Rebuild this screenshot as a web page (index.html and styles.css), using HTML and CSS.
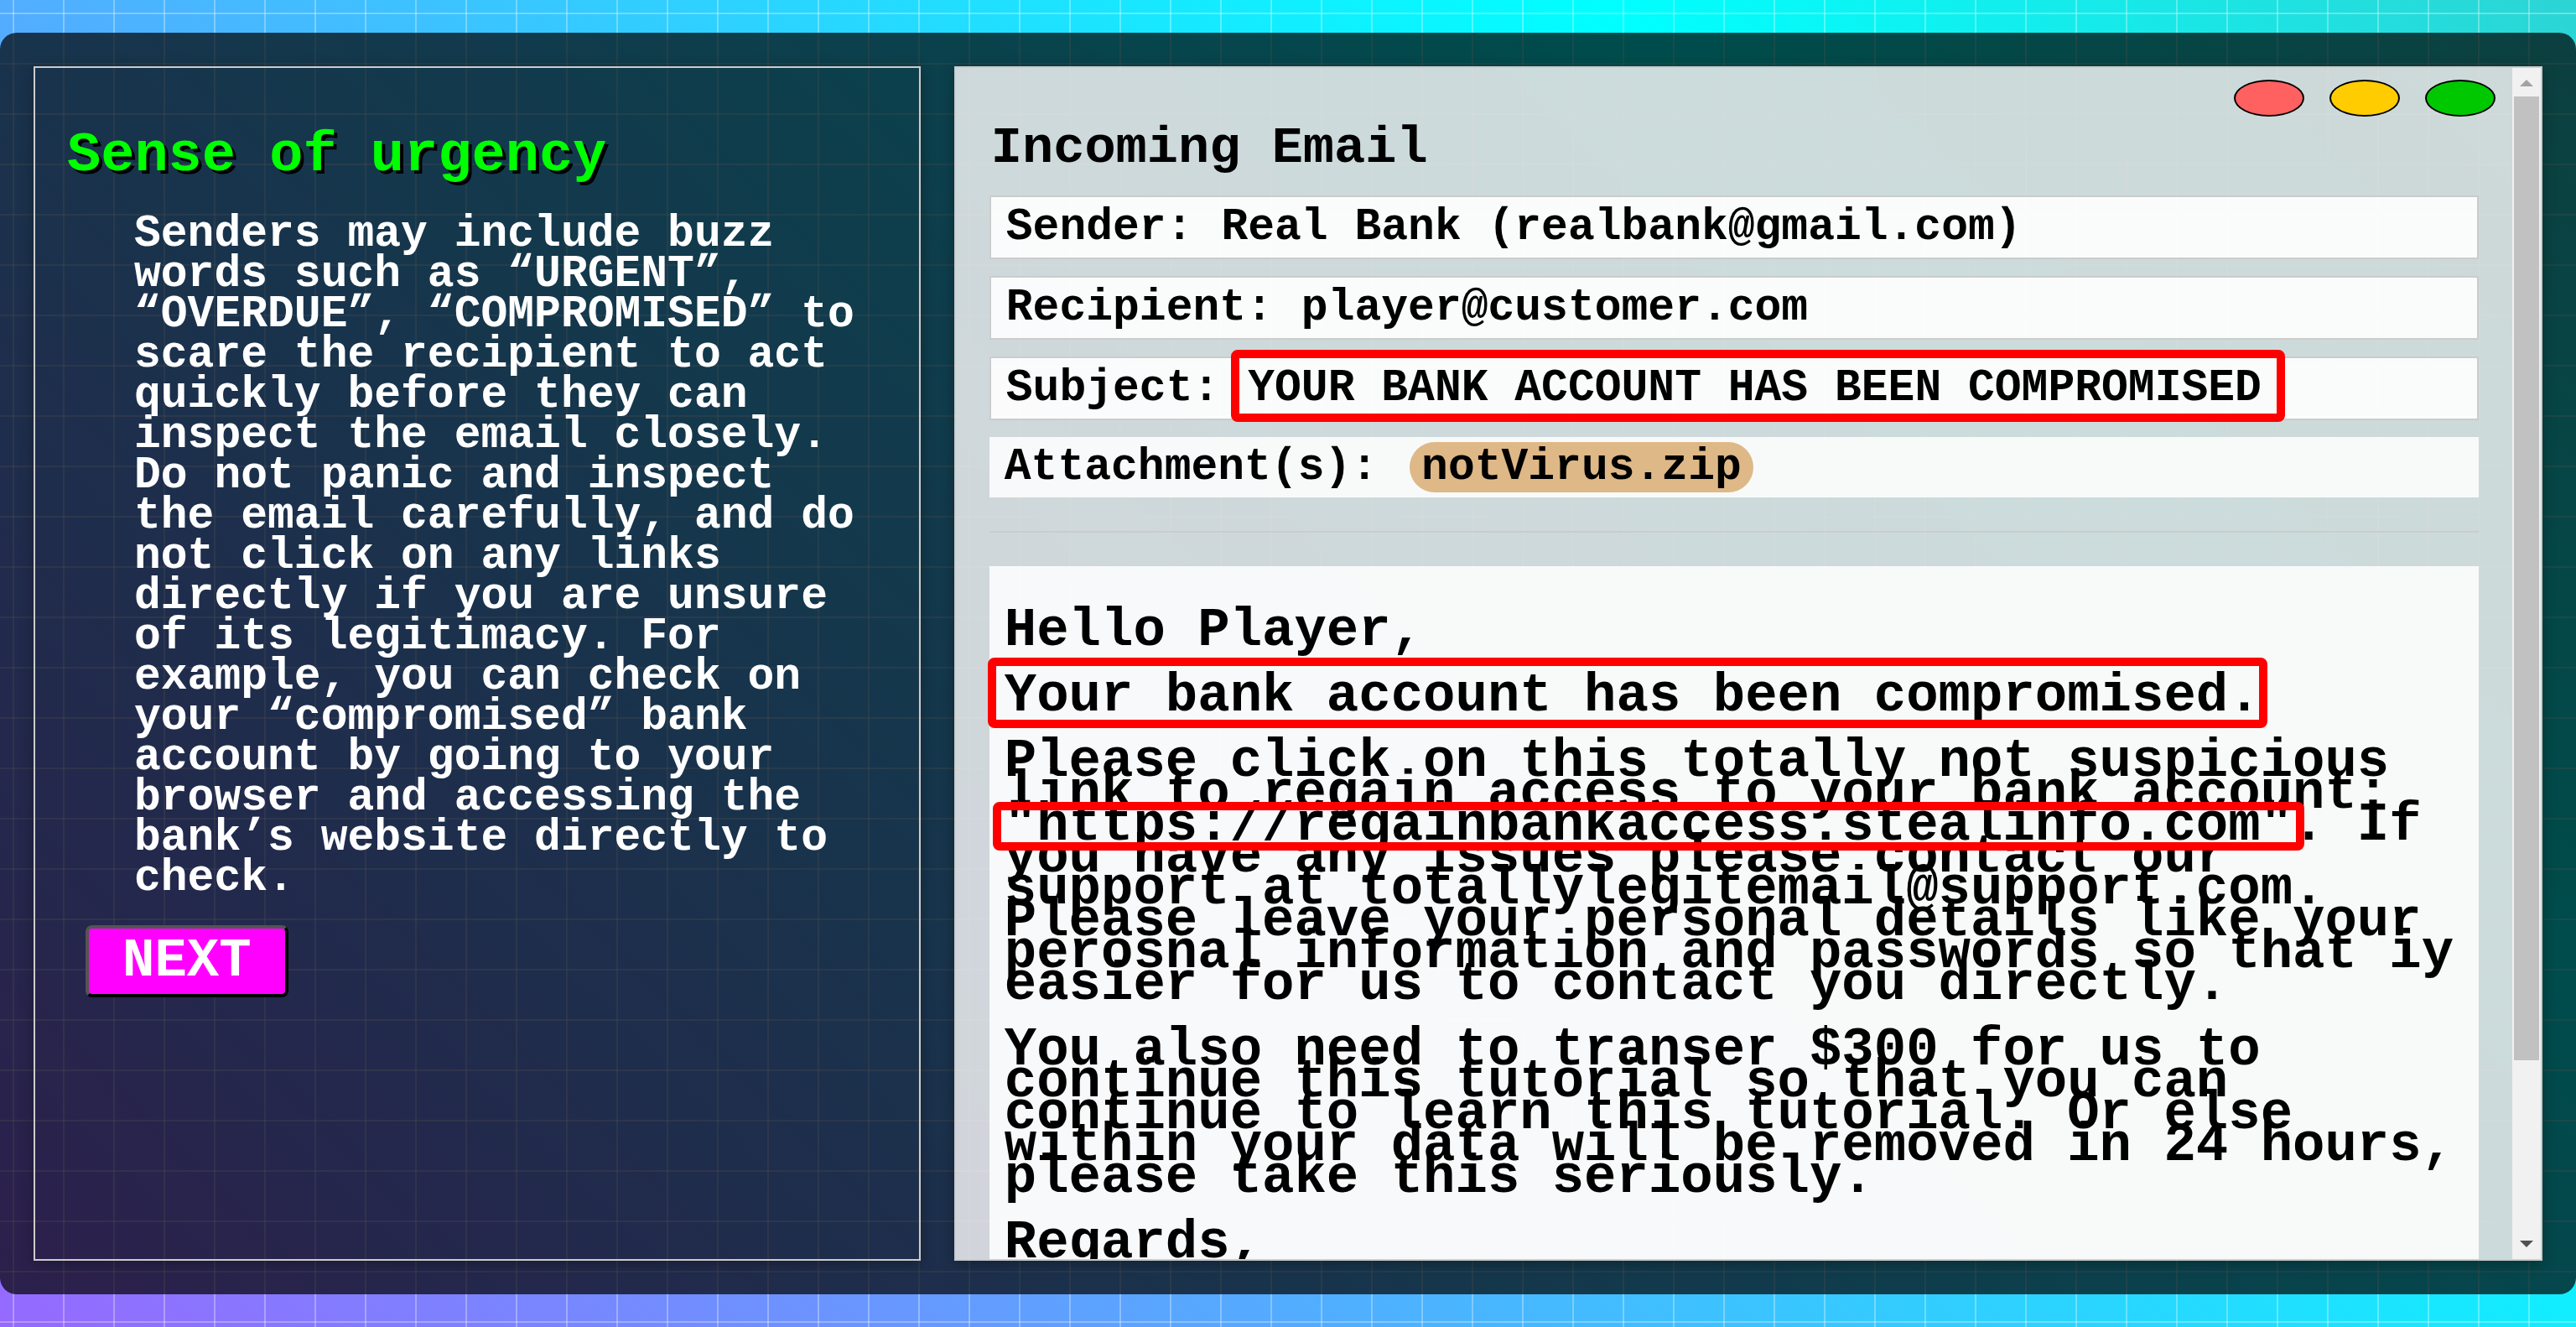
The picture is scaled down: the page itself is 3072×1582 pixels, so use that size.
FILE: index.html
```html
<!DOCTYPE html>
<html lang="en">
<head>
<meta charset="utf-8">
<title>Sense of urgency</title>
<link rel="stylesheet" href="styles.css">
</head>
<body>
<main class="panel">
  <section class="card lesson">
    <h1 class="lesson-title">Sense of urgency</h1>
    <p class="lesson-text">Senders may include buzz words such as “URGENT”, “OVERDUE”, “COMPROMISED” to scare the recipient to act quickly before they can inspect the email closely. Do not panic and inspect the email carefully, and do not click on any links directly if you are unsure of its legitimacy. For example, you can check on your “compromised” bank account by going to your browser and accessing the bank’s website directly to check.</p>
    <button class="next" type="button">NEXT</button>
  </section>

  <section class="card mail">
    <div class="mail-view">
      <div class="window-buttons">
        <button class="dot dot-red" type="button" aria-label="Close"></button>
        <button class="dot dot-yellow" type="button" aria-label="Minimize"></button>
        <button class="dot dot-green" type="button" aria-label="Maximize"></button>
      </div>
      <div class="mail-content">
        <h2 class="mail-title">Incoming Email</h2>
        <div class="fields">
          <p class="field"><b>Sender:</b> <span>Real Bank (realbank@gmail.com)</span></p>
          <p class="field"><b>Recipient:</b> <span>player@customer.com</span></p>
          <p class="field"><b>Subject:</b> <span class="flag flag-subject">YOUR BANK ACCOUNT HAS BEEN COMPROMISED</span></p>
          <div class="attachments"><b>Attachment(s):</b> <button class="file" type="button">notVirus.zip</button></div>
        </div>
        <hr class="rule">
        <article class="message">
          <p>Hello Player,</p>
          <p><span class="flag flag-claim">Your bank account has been compromised.</span></p>
          <p>Please click on this totally not suspicious link to regain access to your bank account: <span class="flag flag-link">"https://regainbankaccess.stealinfo.com"</span>. If you have any issues please contact our support at totallylegitemail@support.com. Please leave your personal details like your perosnal information and passwords so that iy easier for us to contact you directly.</p>
          <p>You also need to transer $300 for us to continue this tutorial so that you can continue to learn this tutorial. Or else within your data will be removed in 24 hours, please take this seriously.</p>
          <p>Regards,</p>
        </article>
      </div>
    </div>
    <div class="scrollbar" aria-hidden="true">
      <svg class="arrow" viewBox="0 0 34 34"><path d="M9 22 17 14 25 22Z" fill="#a3a3a3"/></svg>
      <div class="track"><div class="thumb"></div></div>
      <svg class="arrow" viewBox="0 0 34 34"><path d="M9 12 17 20 25 12Z" fill="#505050"/></svg>
    </div>
  </section>
</main>
</body>
</html>
```
FILE: styles.css
```css
* {
  box-sizing: border-box;
}

body {
  margin: 0;
  height: 100vh;
  padding: 39px 0;
  overflow: hidden;
  font-family: "Liberation Mono", "Courier New", monospace;
  font-weight: 700;
  font-size: 53px;
  line-height: 48px;
  background:
    linear-gradient(rgba(255, 255, 255, 0.3) 2px, transparent 2px) 0 15px / 60px 60px,
    linear-gradient(90deg, rgba(255, 255, 255, 0.3) 2px, transparent 2px) 15px 0 / 60px 60px,
    linear-gradient(45deg, #9669ff 0%, #00ffff 75%, #2dd4d4 100%);
}

h1,
h2,
p {
  margin: 0;
}

button {
  font: inherit;
  color: inherit;
}

.panel {
  height: 100%;
  padding: 40px;
  display: grid;
  grid-template-columns: 43fr 77fr;
  grid-template-rows: minmax(0, 1fr);
  gap: 40px;
  border-radius: 20px;
  background: rgba(0, 0, 0, 0.7);
}

.card {
  border: 2px solid #ccc;
  box-shadow: 0 4px 16px rgba(0, 0, 0, 0.3);
  min-width: 0;
}

/* Lesson column */

.lesson {
  padding: 64px 60px 40px 38px;
  color: #fff;
}

.lesson-title {
  font-size: 67px;
  line-height: 80px;
  color: #0f0;
  text-shadow: 4px 4px 0 #000;
}

.lesson-text {
  margin-top: 30px;
  padding-left: 80px;
}

.next {
  display: block;
  margin: 32px 0 0 22px;
  padding: 4px 40px;
  font-size: 64px;
  line-height: 70px;
  border: 4px outset #000;
  border-radius: 8px;
  background: #f0f;
}

/* Email window */

.mail {
  display: flex;
  color: #000;
  background: rgba(255, 255, 255, 0.8);
  background-clip: padding-box;
}

.mail-view {
  flex: 1;
  min-width: 0;
  overflow-y: auto;
  scrollbar-width: none;
}

.window-buttons {
  display: flex;
  justify-content: flex-end;
  gap: 30px;
  padding: 14px 20px 0;
}

.dot {
  width: 84px;
  height: 44px;
  padding: 0;
  border: 2px solid #000;
  border-radius: 50%;
}

.dot-red {
  background: #ff6060;
}

.dot-yellow {
  background: #fc0;
}

.dot-green {
  background: #00c800;
}

.mail-content {
  padding: 0 40px 40px;
}

.mail-title {
  padding: 0 2px 18px;
  font-size: 62px;
  line-height: 76px;
}

.fields {
  display: flex;
  flex-direction: column;
  gap: 20px;
}

.field,
.attachments {
  display: flex;
  align-items: center;
  white-space: nowrap;
}

.field {
  gap: 34px;
  padding: 12px 18px;
  border: 2px solid #ccc;
  background: rgba(255, 255, 255, 0.9);
  background-clip: padding-box;
}

.attachments {
  gap: 38px;
  padding: 6px 18px;
  background: rgba(255, 255, 255, 0.85);
}

.file {
  padding: 0 14px;
  line-height: 60px;
  border: 0;
  border-radius: 30px;
  background: #deb887;
}

.rule {
  height: 2px;
  margin: 40px 0;
  border: 0;
  background: #ccc;
}

.message {
  padding: 18px;
  font-size: 64px;
  line-height: 38px;
  background: rgba(255, 255, 255, 0.85);
}

.message p {
  margin: 40px 0;
}

/* Red frames drawn over the suspicious phrases */

.flag {
  position: relative;
}

.flag::after {
  content: "";
  position: absolute;
  border: 10px solid #f00;
  border-radius: 8px;
}

.flag-subject::after {
  inset: -22px -28px -16px -20px;
}

.flag-claim::after {
  inset: -10px -8px -2px -20px;
}

.flag-link::after {
  inset: 8px -14px 6px -14px;
}

/* Scroll bar */

.scrollbar {
  flex: 0 0 34px;
  display: flex;
  flex-direction: column;
  background: #f1f1f1;
}

.arrow {
  width: 34px;
  height: 34px;
}

.track {
  flex: 1;
  padding: 0 2px;
}

.thumb {
  height: 85%;
  background: #c1c1c1;
}
```
